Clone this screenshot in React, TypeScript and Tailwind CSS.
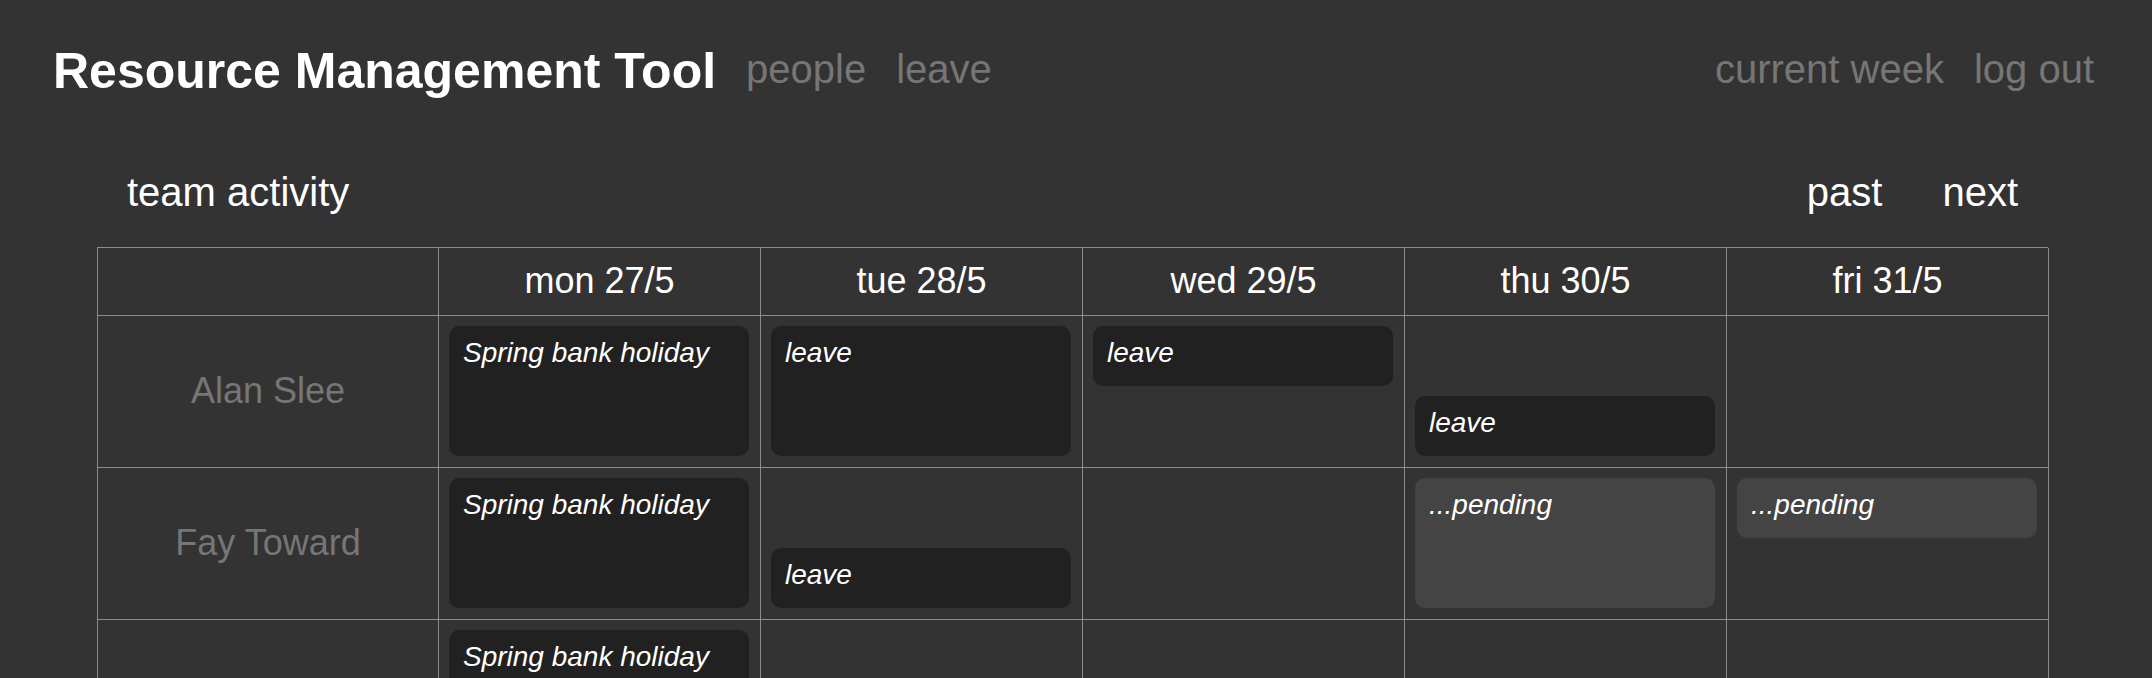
const days = ["mon 27/5", "tue 28/5", "wed 29/5", "thu 30/5", "fri 31/5"];

type Slot = { label: string; span: "full" | "am" | "pm"; pending?: boolean } | null;

const people: { name: string; week: Slot[] }[] = [
  {
    name: "Alan Slee",
    week: [
      { label: "Spring bank holiday", span: "full" },
      { label: "leave", span: "full" },
      { label: "leave", span: "am" },
      { label: "leave", span: "pm" },
      null,
    ],
  },
  {
    name: "Fay Toward",
    week: [
      { label: "Spring bank holiday", span: "full" },
      { label: "leave", span: "pm" },
      null,
      { label: "...pending", span: "full", pending: true },
      { label: "...pending", span: "am", pending: true },
    ],
  },
  {
    // name sits below the fold in the screenshot
    name: "",
    week: [{ label: "Spring bank holiday", span: "full" }, null, null, null, null],
  },
];

function Booking({ label, pending, tall }: { label: string; pending?: boolean; tall?: boolean }) {
  return (
    <div
      className={`${tall ? "h-[130px]" : "h-[60px]"} ${pending ? "bg-[#444444]" : "bg-[#212121]"} rounded-[10px] pl-[14px] pt-[11px] text-[28px] leading-[32px] italic text-white`}
    >
      {label}
    </div>
  );
}

function DayCell({ slot }: { slot: Slot }) {
  return (
    <div className="flex h-[152px] flex-col gap-[10px] border-r border-b border-[#8c8c8c] pt-[10px] pr-[11px] pb-[11px] pl-[10px]">
      {slot && slot.span === "full" && <Booking label={slot.label} pending={slot.pending} tall />}
      {slot && slot.span === "am" && <Booking label={slot.label} pending={slot.pending} />}
      {slot && slot.span === "pm" && (
        <>
          <div className="h-[60px]" />
          <Booking label={slot.label} pending={slot.pending} />
        </>
      )}
    </div>
  );
}

export default function App() {
  return (
    <div className="min-h-screen bg-[#333333] font-['Liberation_Sans',Arial,sans-serif] text-white">
      {/* top bar */}
      <header className="flex items-start justify-between pt-[42px] pr-[58px] pl-[53px]">
        <div className="flex items-start">
          <h1 className="text-[50px] leading-[58px] font-bold">Resource Management Tool</h1>
          <nav className="mt-[3.5px] ml-[30px] flex gap-[30px] text-[40px] leading-[46px] text-[#767676]">
            <a>people</a>
            <a>leave</a>
          </nav>
        </div>
        <nav className="mt-[3.5px] flex gap-[30px] text-[40px] leading-[46px] text-[#767676]">
          <a>current week</a>
          <a>log out</a>
        </nav>
      </header>

      <div className="mt-[69px] ml-[97px] w-[1951px]">
        <div className="flex justify-between px-[30px] text-[40px] leading-[46px]">
          <span>team activity</span>
          <div className="flex gap-[60px]">
            <a>past</a>
            <a>next</a>
          </div>
        </div>

        {/* week grid */}
        <div className="mt-[32px] grid grid-cols-[341px_repeat(5,322px)] border-t border-l border-[#8c8c8c]">
          <div className="h-[68px] border-r border-b border-[#8c8c8c]" />
          {days.map((d) => (
            <div
              key={d}
              className="flex h-[68px] items-center justify-center border-r border-b border-[#8c8c8c] pb-[2px] text-[36px]"
            >
              {d}
            </div>
          ))}
          {people.map((p, idx) => (
            <div key={idx} className="contents">
              <div className="flex h-[152px] items-center justify-center border-r border-b border-[#8c8c8c] pb-[2px] text-[36px] text-[#767676]">
                {p.name}
              </div>
              {p.week.map((slot, i) => (
                <DayCell key={i} slot={slot} />
              ))}
            </div>
          ))}
        </div>
      </div>
    </div>
  );
}
